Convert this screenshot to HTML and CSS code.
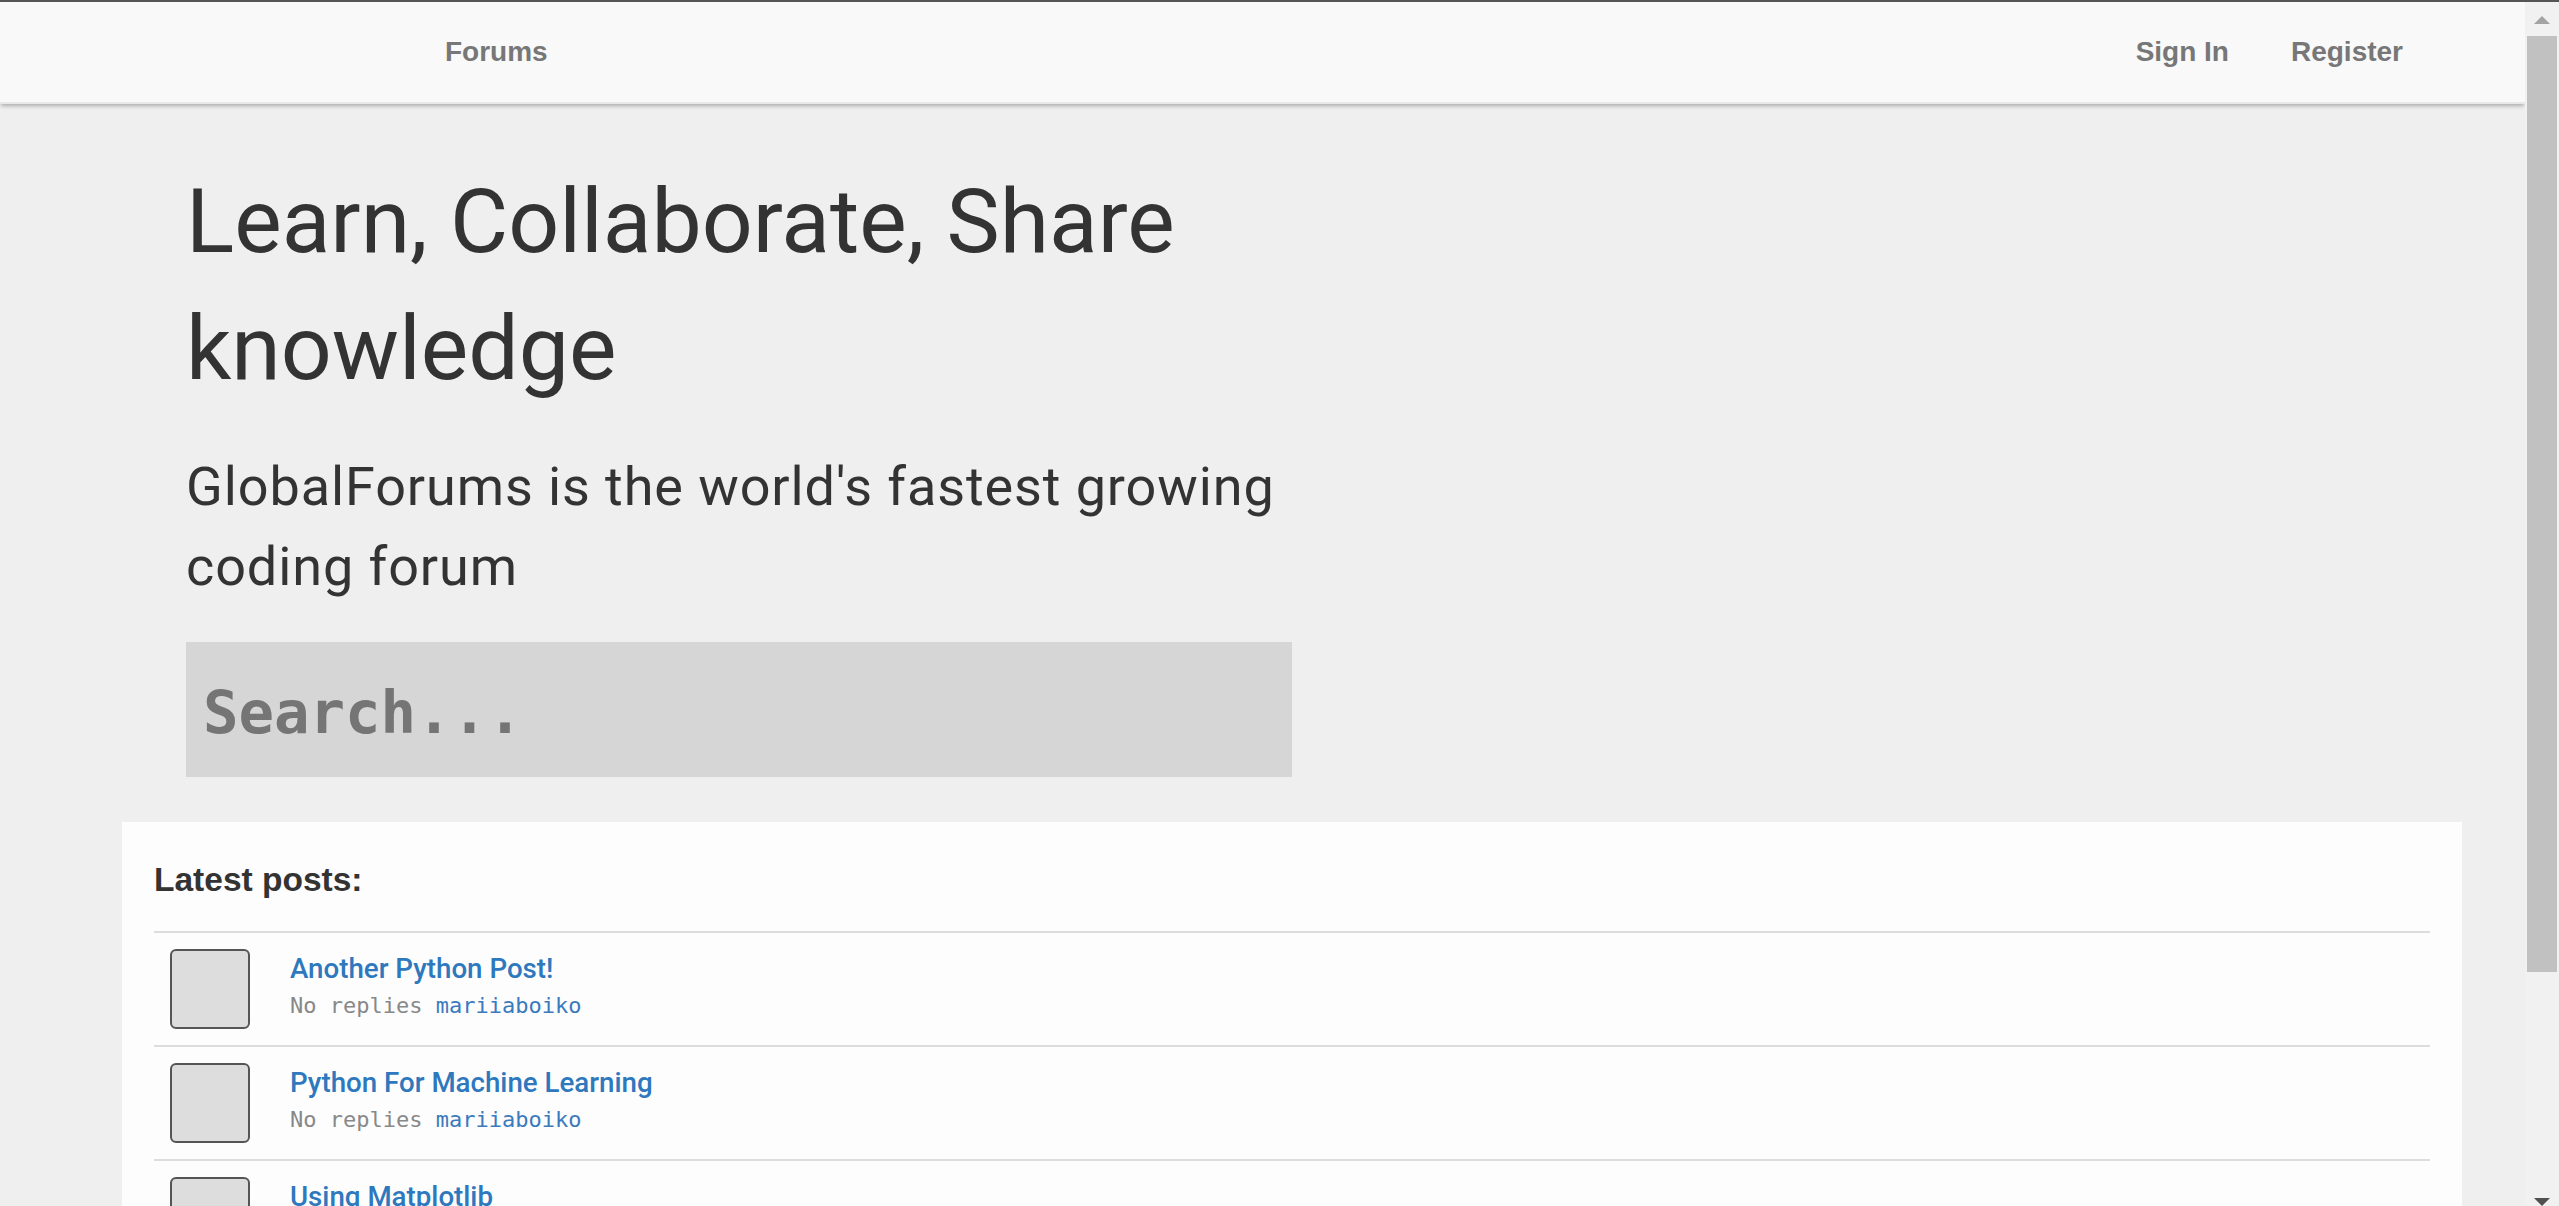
FILE: index.html
```html
<!DOCTYPE html>
<html lang="en">
<head>
<meta charset="utf-8">
<title>GlobalForums</title>
<link rel="stylesheet" href="styles.css">
</head>
<body>
<div class="frame-top"></div>
<div class="window">
  <div class="page">
    <header class="navbar">
      <nav class="nav-left"><a class="nav-link" href="#">Forums</a></nav>
      <nav class="nav-right">
        <a class="nav-link" href="#">Sign In</a>
        <a class="nav-link" href="#">Register</a>
      </nav>
    </header>

    <section class="hero">
      <h1 class="hero-title">Learn, Collaborate, Share knowledge</h1>
      <p class="hero-sub">GlobalForums is the world's fastest growing coding forum</p>
      <input class="search" type="text" placeholder="Search...">
    </section>

    <section class="card">
      <h2 class="card-title">Latest posts:</h2>
      <ul class="posts">
        <li class="post">
          <div class="thumb"></div>
          <div class="post-body">
            <a class="post-title" href="#">Another Python Post!</a>
            <div class="post-meta">No replies <a class="post-user" href="#">mariiaboiko</a></div>
          </div>
        </li>
        <li class="post">
          <div class="thumb"></div>
          <div class="post-body">
            <a class="post-title" href="#">Python For Machine Learning</a>
            <div class="post-meta">No replies <a class="post-user" href="#">mariiaboiko</a></div>
          </div>
        </li>
        <li class="post">
          <div class="thumb"></div>
          <div class="post-body">
            <a class="post-title" href="#">Using Matplotlib</a>
            <div class="post-meta">No replies <a class="post-user" href="#">mariiaboiko</a></div>
          </div>
        </li>
        <li class="post">
          <div class="thumb"></div>
          <div class="post-body">
            <a class="post-title" href="#">Getting Started With Python</a>
            <div class="post-meta">No replies <a class="post-user" href="#">mariiaboiko</a></div>
          </div>
        </li>
      </ul>
    </section>
  </div>

  <div class="scrollbar">
    <div class="sb-button sb-up"><span class="tri-up"></span></div>
    <div class="sb-thumb"></div>
    <div class="sb-space"></div>
    <div class="sb-down"><span class="tri-down"></span></div>
  </div>
</div>
</body>
</html>
```

FILE: styles.css
```css
html, body {
  margin: 0;
  padding: 0;
  height: 100%;
  overflow: hidden;
}

body {
  display: flex;
  flex-direction: column;
  background: #efefef;
  font-family: Roboto, "Liberation Sans", Arial, sans-serif;
  color: #333;
}

.frame-top {
  height: 2px;
  flex: 0 0 2px;
  background: #555;
}

.window {
  flex: 1;
  display: flex;
  min-height: 0;
}

.page {
  flex: 1;
  min-width: 0;
  overflow: hidden;
}

/* Navbar */
.navbar {
  height: 100px;
  background: #f9f9f9;
  border-bottom: 2px solid #e8e8e8;
  box-shadow: 0 3px 4px -1px rgba(0, 0, 0, 0.28);
  display: flex;
  align-items: center;
  justify-content: space-between;
  padding: 0 122px 0 445px;
  position: relative;
  z-index: 1;
}

.nav-right {
  display: flex;
  gap: 62px;
}

.nav-link {
  font-family: "Liberation Sans", Arial, sans-serif;
  font-weight: bold;
  font-size: 28px;
  color: #777;
  text-decoration: none;
}

/* Hero */
.hero {
  margin-left: 186px;
  width: 1106px;
  padding-top: 54px;
}

.hero-title {
  margin: 0;
  font-family: Roboto, sans-serif;
  font-weight: 400;
  font-size: 89.5px;
  line-height: 127px;
  color: #333;
}

.hero-sub {
  margin: 35px 0 0;
  font-family: Roboto, sans-serif;
  font-size: 54px;
  letter-spacing: 0.9px;
  line-height: 80px;
  color: #333;
}

.search {
  display: block;
  box-sizing: border-box;
  margin-top: 35px;
  width: 1106px;
  height: 135px;
  border: none;
  outline: none;
  background: #d6d6d6;
  padding: 6px 17px 0;
  font-family: "DejaVu Sans Mono", monospace;
  font-weight: bold;
  font-size: 59px;
  color: #333;
}

.search::placeholder {
  color: #757575;
}

/* Card */
.card {
  margin: 45px 0 0 122px;
  width: 2340px;
  box-sizing: border-box;
  background: #fdfdfd;
  padding: 39px 32px 32px;
}

.card-title {
  margin: 0 0 32px;
  font-family: "Liberation Sans", Arial, sans-serif;
  font-weight: bold;
  font-size: 33.5px;
  line-height: 38px;
  color: #333;
}

.posts {
  list-style: none;
  margin: 0;
  padding: 0;
}

.post {
  display: flex;
  gap: 40px;
  border-top: 2px solid #dddddd;
  padding: 16px 16px;
}

.thumb {
  flex: 0 0 80px;
  width: 80px;
  height: 80px;
  box-sizing: border-box;
  border: 2px solid #555;
  border-radius: 6px;
  background: #dddddd;
}

.post-body {
  display: flex;
  flex-direction: column;
  padding-top: 3px;
}

.post-title {
  font-family: Roboto, sans-serif;
  font-weight: 500;
  font-size: 27.7px;
  line-height: 34px;
  color: #2e78bd;
  text-decoration: none;
}

.post-meta {
  margin-top: 2px;
  font-family: "DejaVu Sans Mono", monospace;
  font-size: 22px;
  line-height: 36px;
  color: #888;
}

.post-user {
  color: #3a7abd;
  text-decoration: none;
}

/* Scrollbar */
.scrollbar {
  flex: 0 0 34px;
  width: 34px;
  box-sizing: border-box;
  background: #f1f1f1;
  padding: 0 2px;
  display: flex;
  flex-direction: column;
  align-items: stretch;
}

.sb-button {
  height: 34px;
  flex: 0 0 34px;
  display: flex;
  justify-content: center;
  padding-top: 14px;
  box-sizing: border-box;
}

.tri-up {
  width: 0;
  height: 0;
  border-left: 8px solid transparent;
  border-right: 8px solid transparent;
  border-bottom: 8px solid #a3a3a3;
}

.sb-thumb {
  height: 936px;
  flex: 0 0 936px;
  background: #c1c1c1;
}

.sb-space {
  flex: 1;
}

.sb-down {
  display: flex;
  justify-content: center;
}

.tri-down {
  width: 0;
  height: 0;
  border-left: 8px solid transparent;
  border-right: 8px solid transparent;
  border-top: 8px solid #505050;
}
```
